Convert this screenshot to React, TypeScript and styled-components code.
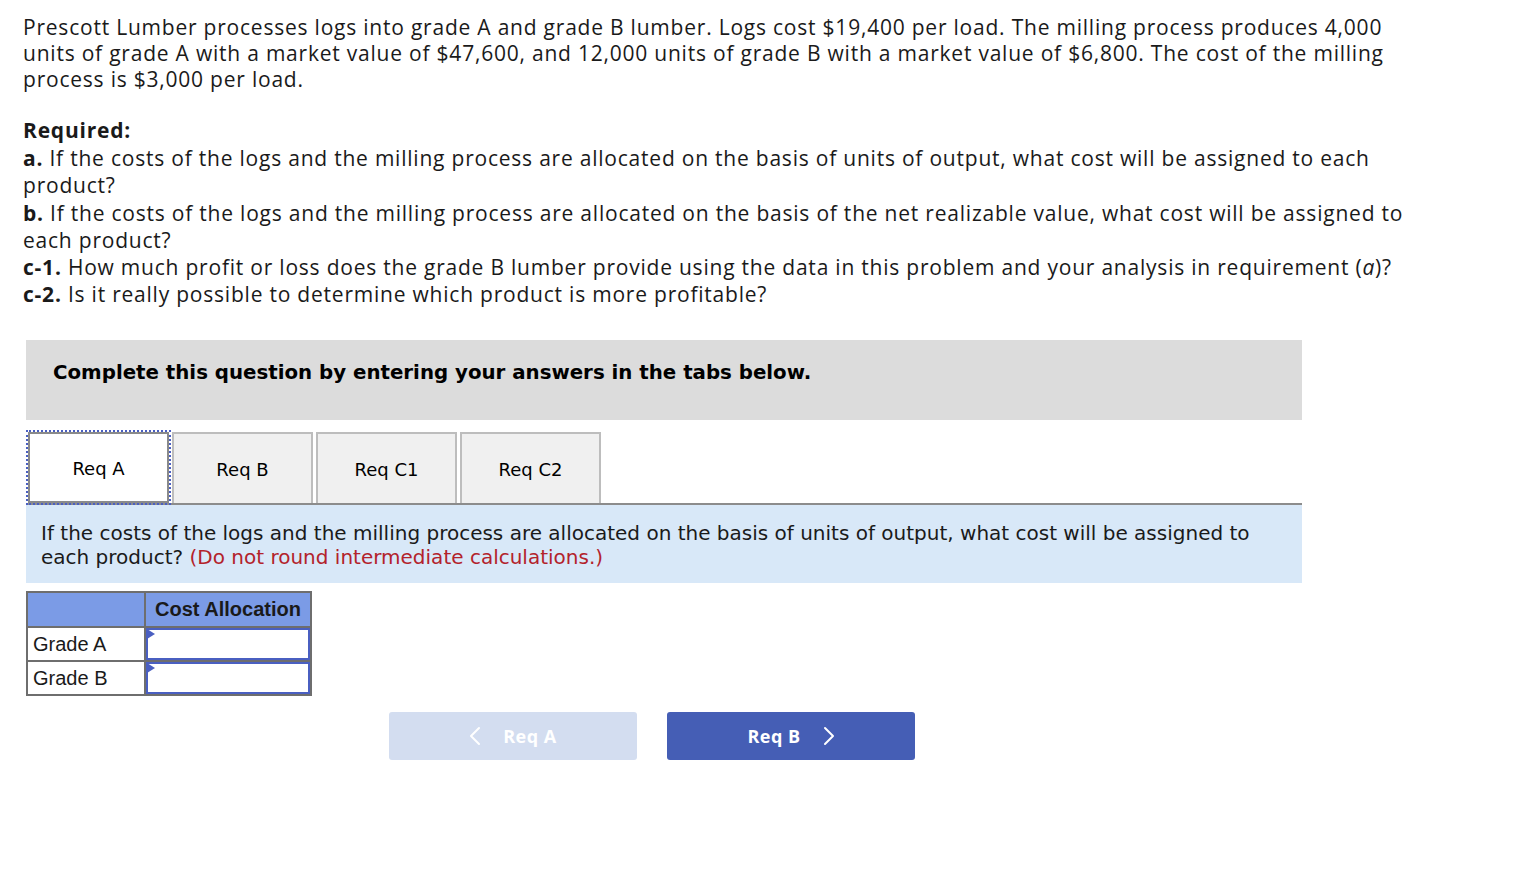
import React from "react";
import styled, { createGlobalStyle } from "styled-components";

const Global = createGlobalStyle`
  html, body { margin: 0; padding: 0; background: #fff; }
  body { font-family: "Open Sans", "Liberation Sans", sans-serif; color: #1a1a1a; }
  * { box-sizing: border-box; }
`;

const Page = styled.div`
  padding: 14px 0 0 23px;
  width: 1530px;
`;

const Prose = styled.div`
  width: 1400px;
  font-family: "Open Sans", "Liberation Sans", sans-serif;
  font-size: 21px;
  letter-spacing: 0.78px;
  line-height: 27.2px;
  color: #1a1a1a;
`;

const Para = styled.p<{ $gap?: number; $lh?: number }>`
  margin: 0 0 ${(p) => p.$gap ?? 0}px 0;
  ${(p) => (p.$lh ? `line-height: ${p.$lh}px;` : "")}
`;

const Strong = styled.b`
  font-weight: 700;
`;

const Work = styled.div`
  margin: 32px 0 0 3px;
  width: 1276px;
  font-family: "DejaVu Sans", Verdana, sans-serif;
`;

const Banner = styled.div`
  background: #dcdcdc;
  height: 80px;
  padding: 21px 0 0 27px;
  font-weight: 700;
  font-size: 19.8px;
  color: #000;
`;

const TabRow = styled.div`
  margin-top: 12px;
  display: flex;
  gap: 3px;
  height: 73px;
  border-bottom: 2px solid #8c8c8c;
  padding-left: 2px;
`;

const Tab = styled.button<{ $active?: boolean }>`
  width: 141px;
  height: 71px;
  padding: 2px 0 0 0;
  font-family: "DejaVu Sans", Verdana, sans-serif;
  font-size: 18px;
  color: #000;
  background: ${(p) => (p.$active ? "#fff" : "#f0f0f0")};
  border: 2px solid ${(p) => (p.$active ? "#8a8a8a" : "#bdbdbd")};
  border-bottom: ${(p) => (p.$active ? "2px solid #8a8a8a" : "none")};
  outline: ${(p) => (p.$active ? "2px dotted #4a5fc1" : "none")};
  outline-offset: 0px;
  cursor: pointer;
`;

const Info = styled.div`
  background: #d8e8f8;
  padding: 16px 15px 14px 15px;
  font-size: 20px;
  line-height: 24px;
  color: #1a1a1a;
`;

const Red = styled.span`
  color: #b3222b;
`;

const Table = styled.table`
  margin-top: 8px;
  border-collapse: collapse;
  font-family: "Liberation Sans", Arial, sans-serif;
  font-size: 20px;
  color: #1a1a1a;
`;

const HeadCell = styled.th<{ $w: number }>`
  width: ${(p) => p.$w}px;
  height: 35px;
  background: #7b9be6;
  border: 2px solid #6e6e6e;
  font-weight: 700;
  text-align: center;
  padding: 0 6px;
  color: #1a1a1a;
`;

const LabelCell = styled.td`
  height: 34px;
  border: 2px solid #6e6e6e;
  padding: 0 5px;
  background: #fff;
`;

const InputCell = styled.td`
  border: 2px solid #6e6e6e;
  padding: 0;
  position: relative;
  background: #fff;
`;

const Field = styled.input`
  display: block;
  width: 100%;
  height: 32px;
  border: 2px solid #4a5fc1;
  outline: none;
  background: #fff;
`;

const Marker = styled.span`
  position: absolute;
  left: 1px;
  top: 1px;
  width: 0;
  height: 0;
  border-top: 5px solid transparent;
  border-bottom: 5px solid transparent;
  border-left: 8px solid #4a5fc1;
`;

const Nav = styled.div`
  margin: 16px 0 0 363px;
  display: flex;
  gap: 30px;
`;

const NavButton = styled.button<{ $disabled?: boolean }>`
  width: 248px;
  height: 48px;
  border: none;
  border-radius: 3px;
  background: ${(p) => (p.$disabled ? "#d3ddf0" : "#455eb5")};
  color: #fff;
  font-family: "Open Sans", "Liberation Sans", sans-serif;
  font-weight: 700;
  font-size: 18px;
  letter-spacing: 0.5px;
  display: flex;
  align-items: center;
  justify-content: center;
  gap: 22px;
  cursor: ${(p) => (p.$disabled ? "default" : "pointer")};
`;

const Chevron = ({ dir }: { dir: "left" | "right" }) => (
  <svg width="12" height="20" viewBox="0 0 12 20" fill="none">
    <path
      d={dir === "left" ? "M10 2 L2 10 L10 18" : "M2 2 L10 10 L2 18"}
      stroke="#fff"
      strokeWidth="2"
      strokeLinecap="round"
      strokeLinejoin="round"
    />
  </svg>
);

export default function App() {
  return (
    <>
      <Global />
      <Page>
        <Prose>
          <Para $gap={25} $lh={26}>
            Prescott Lumber processes logs into grade A and grade B lumber. Logs cost $19,400 per load. The milling
            process produces 4,000 units of grade A with a market value of $47,600, and 12,000 units of grade B with a
            market value of $6,800. The cost of the milling process is $3,000 per load.
          </Para>
          <Para $gap={1}>
            <Strong>Required:</Strong>
          </Para>
          <Para>
            <Strong>a.</Strong> If the costs of the logs and the milling process are allocated on the basis of units of
            output, what cost will be assigned to each product?
          </Para>
          <Para>
            <Strong>b.</Strong> If the costs of the logs and the milling process are allocated on the basis of the net
            realizable value, what cost will be assigned to each product?
          </Para>
          <Para>
            <Strong>c-1.</Strong> How much profit or loss does the grade B lumber provide using the data in this problem
            and your analysis in requirement (<i>a</i>)?
          </Para>
          <Para>
            <Strong>c-2.</Strong> Is it really possible to determine which product is more profitable?
          </Para>
        </Prose>

        <Work>
          <Banner>Complete this question by entering your answers in the tabs below.</Banner>
          <TabRow>
            <Tab $active>Req A</Tab>
            <Tab>Req B</Tab>
            <Tab>Req C1</Tab>
            <Tab>Req C2</Tab>
          </TabRow>
          <Info>
            If the costs of the logs and the milling process are allocated on the basis of units of output, what cost
            will be assigned to each product? <Red>(Do not round intermediate calculations.)</Red>
          </Info>
          <Table>
            <thead>
              <tr>
                <HeadCell $w={118} />
                <HeadCell $w={166}>Cost Allocation</HeadCell>
              </tr>
            </thead>
            <tbody>
              <tr>
                <LabelCell>Grade A</LabelCell>
                <InputCell>
                  <Field aria-label="Grade A cost allocation" />
                  <Marker />
                </InputCell>
              </tr>
              <tr>
                <LabelCell>Grade B</LabelCell>
                <InputCell>
                  <Field aria-label="Grade B cost allocation" />
                  <Marker />
                </InputCell>
              </tr>
            </tbody>
          </Table>
          <Nav>
            <NavButton $disabled disabled>
              <Chevron dir="left" />
              <span>Req A</span>
            </NavButton>
            <NavButton>
              <span>Req B</span>
              <Chevron dir="right" />
            </NavButton>
          </Nav>
        </Work>
      </Page>
    </>
  );
}
